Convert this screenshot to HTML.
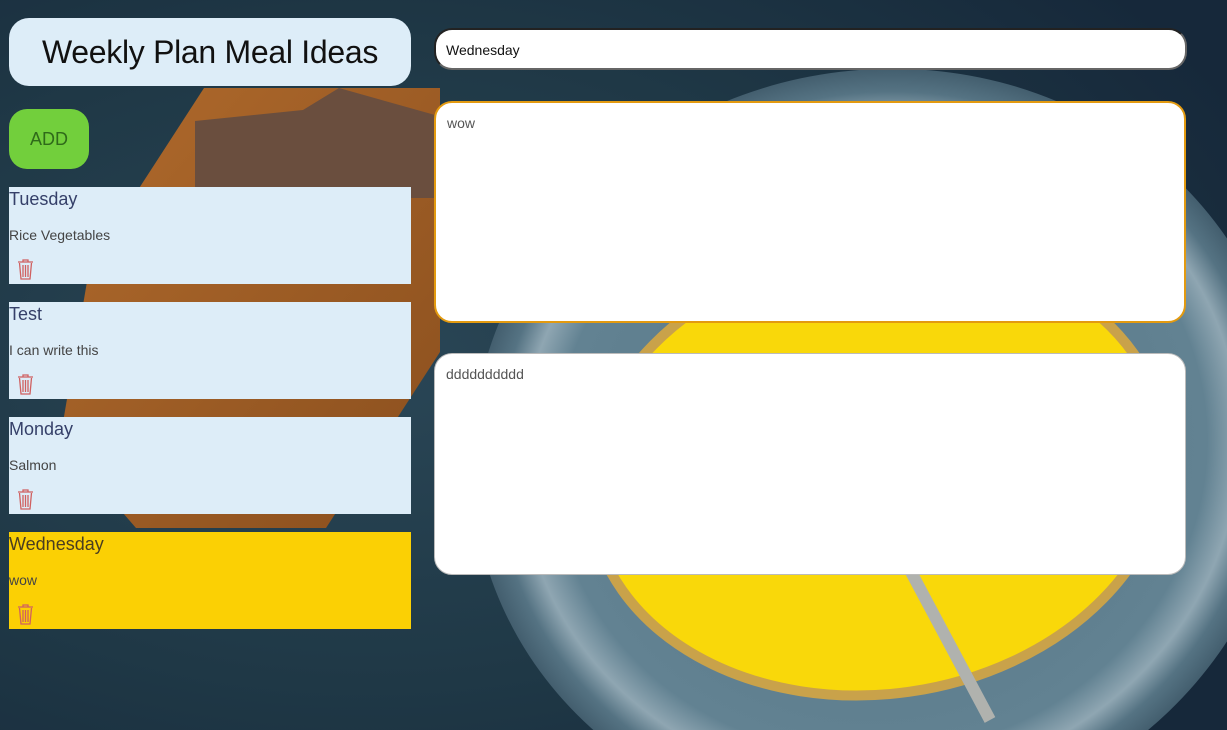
<!DOCTYPE html>
<html><head><meta charset="utf-8"><style>
*{box-sizing:border-box;margin:0;padding:0}
html,body{width:1227px;height:730px;overflow:hidden}
body{position:relative;font-family:"Liberation Sans",sans-serif;background:#1f3846}
svg.bg{position:absolute;left:0;top:0}
.title{position:absolute;left:9px;top:18px;width:402px;height:68px;background:#ddedf8;border-radius:20px;font-size:32px;color:#111;text-align:center;line-height:68px;letter-spacing:-0.3px}
.add{position:absolute;left:9px;top:109px;width:80px;height:60px;background:#72cf3c;border-radius:18px;color:#2f6a1a;font-size:18px;text-align:center;line-height:60px}
.card{position:absolute;left:9px;width:402px;height:97px;background:#ddedf8;color:#333}
.card h3{font-weight:normal;font-size:18px;color:#354069;padding-top:1px;line-height:22px}
.card p{font-size:14px;margin-top:17px;color:#444}
.card svg{position:absolute;left:8px;top:72px}
.inp{position:absolute;left:434px;top:28px;width:753px;height:42px;background:#fff;border-radius:18px;border-top:2px solid #222;border-left:2px solid #222;border-bottom:2px solid #666;border-right:2px solid #666;font-size:14px;padding:12px 10px;color:#111}
.ta{position:absolute;left:434px;width:752px;height:222px;background:#fff;border-radius:18px;font-size:14px;color:#555;padding:12px 11px}
</style></head><body>
<svg class="bg" width="1227" height="730" viewBox="0 0 1227 730">
<defs>
<radialGradient id="g0" cx="30%" cy="50%" r="80%"><stop offset="0" stop-color="#2a4656"/><stop offset="0.55" stop-color="#1f3846"/><stop offset="1" stop-color="#16283a"/></radialGradient>
<radialGradient id="gp"><stop offset="0" stop-color="#557585"/><stop offset="0.8" stop-color="#628292"/><stop offset="0.88" stop-color="#8fa6b2"/><stop offset="0.94" stop-color="#557383"/><stop offset="1" stop-color="#435e6e"/></radialGradient>
<linearGradient id="gb" x1="0" y1="0" x2="1" y2="1"><stop offset="0" stop-color="#b06a2c"/><stop offset="1" stop-color="#8a4f1e"/></linearGradient>
</defs>
<rect width="1227" height="730" fill="url(#g0)"/>
<ellipse cx="880" cy="450" rx="410" ry="380" transform="rotate(-12 880 450)" fill="url(#gp)"/>
<ellipse cx="878" cy="472" rx="290" ry="222" transform="rotate(-8 878 472)" fill="#f9d80a" stroke="#c9a24a" stroke-width="10"/>
<line x1="910" y1="570" x2="990" y2="720" stroke="#b0b2ae" stroke-width="12"/>
<polygon points="204,88 440,88 440,352 326,528 136,528 60,440 90,264" fill="url(#gb)"/>
<polygon points="195,121 303,110 339,88 435,115 435,198 195,198" fill="#6a4e3e"/>
</svg>
<div class="title">Weekly Plan Meal Ideas</div>
<div class="add">ADD</div>
<div class="card" style="top:187px"><h3>Tuesday</h3><p>Rice Vegetables</p><svg width="17" height="21" viewBox="0 0 17 21"><path d="M1 3h15M6 3V1h5v2M2.5 4l1.5 16h9l1.5-16M6 6v12M8.5 6v12M11 6v12" stroke="#d06060" stroke-width="1.3" fill="none"/></svg></div>
<div class="card" style="top:302px"><h3>Test</h3><p>I can write this</p><svg width="17" height="21" viewBox="0 0 17 21"><path d="M1 3h15M6 3V1h5v2M2.5 4l1.5 16h9l1.5-16M6 6v12M8.5 6v12M11 6v12" stroke="#d06060" stroke-width="1.3" fill="none"/></svg></div>
<div class="card" style="top:417px"><h3>Monday</h3><p>Salmon</p><svg width="17" height="21" viewBox="0 0 17 21"><path d="M1 3h15M6 3V1h5v2M2.5 4l1.5 16h9l1.5-16M6 6v12M8.5 6v12M11 6v12" stroke="#d06060" stroke-width="1.3" fill="none"/></svg></div>
<div class="card" style="top:532px;background:#fbd004"><h3 style="color:#4a3e20">Wednesday</h3><p>wow</p><svg width="17" height="21" viewBox="0 0 17 21"><path d="M1 3h15M6 3V1h5v2M2.5 4l1.5 16h9l1.5-16M6 6v12M8.5 6v12M11 6v12" stroke="#d06060" stroke-width="1.3" fill="none"/></svg></div>
<div class="inp">Wednesday</div>
<div class="ta" style="top:101px;border:2px solid #e39a10">wow</div>
<div class="ta" style="top:353px;border:1px solid #bbb">dddddddddd</div>
</body></html>
